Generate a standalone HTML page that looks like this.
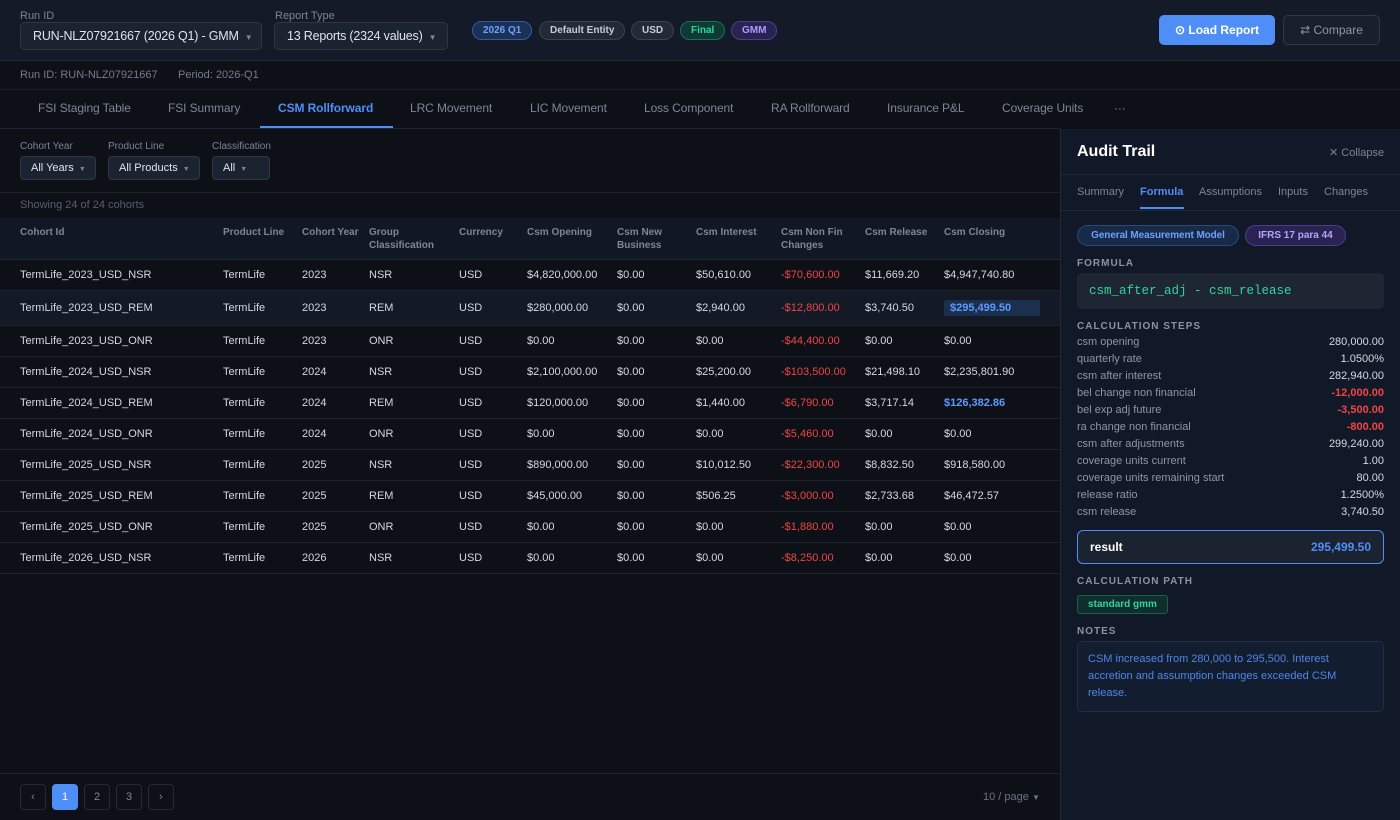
<!DOCTYPE html>
<html><head><meta charset="utf-8"><style>
*{box-sizing:border-box;margin:0;padding:0}
body{width:1400px;height:820px;overflow:hidden;background:#0d1017;font-family:"Liberation Sans",sans-serif;color:#c9d1dc;position:relative;font-size:12px}
div,span{white-space:nowrap}
.a{position:absolute;white-space:nowrap}
.top{position:absolute;left:0;top:0;width:1400px;height:61px;background:#141a27;border-bottom:1px solid #222a38}
.lbl{font-size:11px;color:#7b8494}
.sel{position:absolute;height:28px;border:1px solid #2e3746;border-radius:5px;background:#1b2230;color:#dfe5ee;font-size:12.5px;padding:0 12px;line-height:26px;letter-spacing:-0.2px}
.sel i{font-style:normal;font-size:8px;color:#7b8494;margin-left:6px}
.pill{position:absolute;top:21px;height:19px;border-radius:10px;font-size:10px;font-weight:bold;line-height:17px;padding:0 10px}
.tabs{position:absolute;top:90px;left:0;width:1060px;height:39px;border-bottom:1px solid #1f2633}
.tab{position:absolute;top:11px;font-size:12px;color:#7d8694;letter-spacing:-0.1px}
.fs{position:absolute;height:24px;border:1px solid #2e3746;border-radius:4px;background:#1b2230;color:#dfe5ee;font-size:11px;padding:0 10px;line-height:22px;top:156px}
.fs i{font-style:normal;font-size:7px;color:#7b8494;margin-left:5px}
.th{position:absolute;top:226px;font-size:10px;font-weight:bold;color:#7d8694;line-height:13px}
.row{position:absolute;left:0;width:1060px;border-bottom:1px solid #1d2430}
.row span{position:absolute;font-size:11px;color:#d3d9e2;white-space:nowrap}
.neg{color:#f04545!important}
.rp{position:absolute;left:1060px;top:129px;width:340px;height:691px;background:#111827;border-left:1px solid #222a38}
.sec{position:absolute;left:16px;font-size:10px;font-weight:bold;letter-spacing:1px;color:#8a93a2}
.st{position:absolute;left:16px;width:307px;font-size:11px;color:#8e97a5}
.st b{position:absolute;right:0;font-weight:normal;color:#d3d9e2}
.st b.r{color:#f04545;font-weight:bold}
.pg{position:absolute;top:784px;width:26px;height:26px;border:1px solid #232a36;border-radius:4px;font-size:11px;color:#7d8694;text-align:center;line-height:24px}
</style></head><body>
<div class="top"></div>
<div class="a lbl" style="left:20px;top:10px">Run ID</div>
<div class="sel" style="left:20px;top:22px;width:242px">RUN-NLZ07921667 (2026 Q1) - GMM<i>▼</i></div>
<div class="a lbl" style="left:275px;top:10px">Report Type</div>
<div class="sel" style="left:274px;top:22px;width:174px">13 Reports (2324 values)<i>▼</i></div>
<div class="pill" style="left:472px;background:#1b3156;border:1px solid #2f5ba8;color:#6ea0ff">2026 Q1</div>
<div class="pill" style="left:539px;background:#232a36;border:1px solid #3a4352;color:#c5ccd6">Default Entity</div>
<div class="pill" style="left:631px;background:#232a36;border:1px solid #3a4352;color:#c5ccd6">USD</div>
<div class="pill" style="left:680px;background:#0f3a33;border:1px solid #16705d;color:#2fd5a0">Final</div>
<div class="pill" style="left:731px;background:#2a2352;border:1px solid #4a3f8f;color:#a99cff">GMM</div>
<div class="a" style="left:1159px;top:15px;width:116px;height:30px;background:#4f8ef7;border-radius:5px;color:#fff;font-weight:bold;font-size:12px;text-align:center;line-height:30px">⊙ Load Report</div>
<div class="a" style="left:1283px;top:15px;width:97px;height:30px;background:#1a202b;border:1px solid #303846;border-radius:5px;color:#8d96a4;font-size:12px;text-align:center;line-height:28px">⇄ Compare</div>
<div class="a" style="left:20px;top:69px;font-size:11px;color:#737c8b">Run ID: RUN-NLZ07921667</div>
<div class="a" style="left:178px;top:69px;font-size:11px;color:#737c8b">Period: 2026-Q1</div>
<div class="a" style="left:0;top:89px;width:1400px;border-top:1px solid #1a202b"></div>
<div class="tabs">
<div class="tab" style="left:38px">FSI Staging Table</div>
<div class="tab" style="left:168px">FSI Summary</div>
<div class="tab" style="left:278px;color:#4f8ef7;font-weight:bold">CSM Rollforward</div>
<div class="a" style="left:260px;top:36px;width:133px;height:2px;background:#4f8ef7"></div>
<div class="tab" style="left:410px">LRC Movement</div>
<div class="tab" style="left:530px">LIC Movement</div>
<div class="tab" style="left:644px">Loss Component</div>
<div class="tab" style="left:771px">RA Rollforward</div>
<div class="tab" style="left:887px">Insurance P&amp;L</div>
<div class="tab" style="left:1002px">Coverage Units</div>
<div class="tab" style="left:1114px">···</div>
</div>
<div class="a" style="left:20px;top:141px;font-size:10px;color:#7b8494">Cohort Year</div>
<div class="a" style="left:108px;top:141px;font-size:10px;color:#7b8494">Product Line</div>
<div class="a" style="left:212px;top:141px;font-size:10px;color:#7b8494">Classification</div>
<div class="fs" style="left:20px;width:76px">All Years<i>▼</i></div>
<div class="fs" style="left:108px;width:92px">All Products<i>▼</i></div>
<div class="fs" style="left:212px;width:58px">All<i>▼</i></div>
<div class="a" style="left:0;top:192px;width:1060px;border-top:1px solid #1d2430"></div>
<div class="a" style="left:20px;top:199px;font-size:11px;color:#555e6c">Showing 24 of 24 cohorts</div>
<div class="a" style="left:0;top:218px;width:1060px;height:42px;background:#111725;border-bottom:1px solid #232a36"></div>
<div class="th" style="left:20px">Cohort Id</div>
<div class="th" style="left:223px">Product Line</div>
<div class="th" style="left:302px">Cohort Year</div>
<div class="th" style="left:369px">Group<br>Classification</div>
<div class="th" style="left:459px">Currency</div>
<div class="th" style="left:527px">Csm Opening</div>
<div class="th" style="left:617px">Csm New<br>Business</div>
<div class="th" style="left:696px">Csm Interest</div>
<div class="th" style="left:781px">Csm Non Fin<br>Changes</div>
<div class="th" style="left:865px">Csm Release</div>
<div class="th" style="left:944px">Csm Closing</div>

<div class="row" style="top:260px;height:31px"><span style="left:20px;top:9px">TermLife_2023_USD_NSR</span><span style="left:223px;top:9px">TermLife</span><span style="left:302px;top:9px">2023</span><span style="left:369px;top:9px">NSR</span><span style="left:459px;top:9px">USD</span><span style="left:527px;top:9px">$4,820,000.00</span><span style="left:617px;top:9px">$0.00</span><span style="left:696px;top:9px">$50,610.00</span><span class="neg" style="left:781px;top:9px">-$70,600.00</span><span style="left:865px;top:9px">$11,669.20</span><span style="left:944px;top:9px">$4,947,740.80</span></div>
<div class="row" style="top:291px;height:35px;background:#131a26"><span style="left:20px;top:11px">TermLife_2023_USD_REM</span><span style="left:223px;top:11px">TermLife</span><span style="left:302px;top:11px">2023</span><span style="left:369px;top:11px">REM</span><span style="left:459px;top:11px">USD</span><span style="left:527px;top:11px">$280,000.00</span><span style="left:617px;top:11px">$0.00</span><span style="left:696px;top:11px">$2,940.00</span><span class="neg" style="left:781px;top:11px">-$12,800.00</span><span style="left:865px;top:11px">$3,740.50</span><span style="left:944px;top:9px;width:96px;height:16px;background:#1d2f4f;border-radius:2px;padding:2px 6px;color:#5b9bff;font-weight:bold">$295,499.50</span></div>
<div class="row" style="top:326px;height:31px"><span style="left:20px;top:9px">TermLife_2023_USD_ONR</span><span style="left:223px;top:9px">TermLife</span><span style="left:302px;top:9px">2023</span><span style="left:369px;top:9px">ONR</span><span style="left:459px;top:9px">USD</span><span style="left:527px;top:9px">$0.00</span><span style="left:617px;top:9px">$0.00</span><span style="left:696px;top:9px">$0.00</span><span class="neg" style="left:781px;top:9px">-$44,400.00</span><span style="left:865px;top:9px">$0.00</span><span style="left:944px;top:9px">$0.00</span></div>
<div class="row" style="top:357px;height:31px"><span style="left:20px;top:9px">TermLife_2024_USD_NSR</span><span style="left:223px;top:9px">TermLife</span><span style="left:302px;top:9px">2024</span><span style="left:369px;top:9px">NSR</span><span style="left:459px;top:9px">USD</span><span style="left:527px;top:9px">$2,100,000.00</span><span style="left:617px;top:9px">$0.00</span><span style="left:696px;top:9px">$25,200.00</span><span class="neg" style="left:781px;top:9px">-$103,500.00</span><span style="left:865px;top:9px">$21,498.10</span><span style="left:944px;top:9px">$2,235,801.90</span></div>
<div class="row" style="top:388px;height:31px"><span style="left:20px;top:9px">TermLife_2024_USD_REM</span><span style="left:223px;top:9px">TermLife</span><span style="left:302px;top:9px">2024</span><span style="left:369px;top:9px">REM</span><span style="left:459px;top:9px">USD</span><span style="left:527px;top:9px">$120,000.00</span><span style="left:617px;top:9px">$0.00</span><span style="left:696px;top:9px">$1,440.00</span><span class="neg" style="left:781px;top:9px">-$6,790.00</span><span style="left:865px;top:9px">$3,717.14</span><span style="left:944px;top:9px;color:#5b9bff;font-weight:bold">$126,382.86</span></div>
<div class="row" style="top:419px;height:31px"><span style="left:20px;top:9px">TermLife_2024_USD_ONR</span><span style="left:223px;top:9px">TermLife</span><span style="left:302px;top:9px">2024</span><span style="left:369px;top:9px">ONR</span><span style="left:459px;top:9px">USD</span><span style="left:527px;top:9px">$0.00</span><span style="left:617px;top:9px">$0.00</span><span style="left:696px;top:9px">$0.00</span><span class="neg" style="left:781px;top:9px">-$5,460.00</span><span style="left:865px;top:9px">$0.00</span><span style="left:944px;top:9px">$0.00</span></div>
<div class="row" style="top:450px;height:31px"><span style="left:20px;top:9px">TermLife_2025_USD_NSR</span><span style="left:223px;top:9px">TermLife</span><span style="left:302px;top:9px">2025</span><span style="left:369px;top:9px">NSR</span><span style="left:459px;top:9px">USD</span><span style="left:527px;top:9px">$890,000.00</span><span style="left:617px;top:9px">$0.00</span><span style="left:696px;top:9px">$10,012.50</span><span class="neg" style="left:781px;top:9px">-$22,300.00</span><span style="left:865px;top:9px">$8,832.50</span><span style="left:944px;top:9px">$918,580.00</span></div>
<div class="row" style="top:481px;height:31px"><span style="left:20px;top:9px">TermLife_2025_USD_REM</span><span style="left:223px;top:9px">TermLife</span><span style="left:302px;top:9px">2025</span><span style="left:369px;top:9px">REM</span><span style="left:459px;top:9px">USD</span><span style="left:527px;top:9px">$45,000.00</span><span style="left:617px;top:9px">$0.00</span><span style="left:696px;top:9px">$506.25</span><span class="neg" style="left:781px;top:9px">-$3,000.00</span><span style="left:865px;top:9px">$2,733.68</span><span style="left:944px;top:9px">$46,472.57</span></div>
<div class="row" style="top:512px;height:31px"><span style="left:20px;top:9px">TermLife_2025_USD_ONR</span><span style="left:223px;top:9px">TermLife</span><span style="left:302px;top:9px">2025</span><span style="left:369px;top:9px">ONR</span><span style="left:459px;top:9px">USD</span><span style="left:527px;top:9px">$0.00</span><span style="left:617px;top:9px">$0.00</span><span style="left:696px;top:9px">$0.00</span><span class="neg" style="left:781px;top:9px">-$1,880.00</span><span style="left:865px;top:9px">$0.00</span><span style="left:944px;top:9px">$0.00</span></div>
<div class="row" style="top:543px;height:31px"><span style="left:20px;top:9px">TermLife_2026_USD_NSR</span><span style="left:223px;top:9px">TermLife</span><span style="left:302px;top:9px">2026</span><span style="left:369px;top:9px">NSR</span><span style="left:459px;top:9px">USD</span><span style="left:527px;top:9px">$0.00</span><span style="left:617px;top:9px">$0.00</span><span style="left:696px;top:9px">$0.00</span><span class="neg" style="left:781px;top:9px">-$8,250.00</span><span style="left:865px;top:9px">$0.00</span><span style="left:944px;top:9px">$0.00</span></div>

<div class="a" style="left:0;top:773px;width:1060px;border-top:1px solid #1d2430"></div>
<div class="pg" style="left:20px">‹</div>
<div class="pg" style="left:52px;background:#4f8ef7;border-color:#4f8ef7;color:#fff">1</div>
<div class="pg" style="left:84px">2</div>
<div class="pg" style="left:116px">3</div>
<div class="pg" style="left:148px">›</div>
<div class="a" style="left:983px;top:791px;font-size:11px;color:#6b7482">10 / page <span style="font-size:8px">▼</span></div>

<div class="rp">
<div class="a" style="left:16px;top:14px;font-size:16px;font-weight:bold;color:#fff">Audit Trail</div>
<div class="a" style="left:268px;top:17px;font-size:11px;color:#7d8694">✕ Collapse</div>
<div class="a" style="left:0;top:45px;width:340px;border-top:1px solid #222a38"></div>
<div class="a" style="left:16px;top:57px;font-size:11px;color:#7d8694">Summary</div>
<div class="a" style="left:79px;top:57px;font-size:11px;color:#4f8ef7;font-weight:bold">Formula</div>
<div class="a" style="left:79px;top:78px;width:44px;height:2px;background:#4f8ef7"></div>
<div class="a" style="left:138px;top:57px;font-size:11px;color:#7d8694">Assumptions</div>
<div class="a" style="left:217px;top:57px;font-size:11px;color:#7d8694">Inputs</div>
<div class="a" style="left:263px;top:57px;font-size:11px;color:#7d8694">Changes</div>
<div class="a" style="left:0;top:81px;width:340px;border-top:1px solid #222a38"></div>
<div class="a" style="left:16px;top:96px;width:162px;height:21px;text-align:center;border-radius:11px;background:#172a47;border:1px solid #2b4a78;color:#6ea0ff;font-size:10px;font-weight:bold;line-height:19px;letter-spacing:-0.1px">General Measurement Model</div>
<div class="a" style="left:184px;top:96px;width:101px;height:21px;text-align:center;border-radius:11px;background:#2a2352;border:1px solid #4a3f8f;color:#b1a5ff;font-size:10px;font-weight:bold;line-height:19px">IFRS 17 para 44</div>
<div class="sec" style="top:129px">FORMULA</div>
<div class="a" style="left:16px;top:144px;width:307px;height:36px;background:#1e2633;border-radius:5px;padding-left:12px;line-height:36px;font-family:'Liberation Mono','DejaVu Sans Mono',monospace;font-size:12.5px;color:#2fd5a0">csm_after_adj - csm_release</div>
<div class="sec" style="top:192px">CALCULATION STEPS</div>
<div class="st" style="top:207px">csm opening<b>280,000.00</b></div>
<div class="st" style="top:224px">quarterly rate<b>1.0500%</b></div>
<div class="st" style="top:241px">csm after interest<b>282,940.00</b></div>
<div class="st" style="top:258px">bel change non financial<b class="r">-12,000.00</b></div>
<div class="st" style="top:275px">bel exp adj future<b class="r">-3,500.00</b></div>
<div class="st" style="top:292px">ra change non financial<b class="r">-800.00</b></div>
<div class="st" style="top:309px">csm after adjustments<b>299,240.00</b></div>
<div class="st" style="top:326px">coverage units current<b>1.00</b></div>
<div class="st" style="top:343px">coverage units remaining start<b>80.00</b></div>
<div class="st" style="top:360px">release ratio<b>1.2500%</b></div>
<div class="st" style="top:377px">csm release<b>3,740.50</b></div>
<div class="a" style="left:16px;top:401px;width:307px;height:34px;background:#1b2331;border:1px solid #4f8ef7;border-radius:6px"><span class="a" style="left:12px;top:9px;font-size:12px;font-weight:bold;color:#fff">result</span><span class="a" style="right:12px;top:9px;font-size:12px;font-weight:bold;color:#4f8ef7">295,499.50</span></div>
<div class="sec" style="top:447px">CALCULATION PATH</div>
<div class="a" style="left:16px;top:466px;width:91px;text-align:center;height:19px;background:#0f2e2c;border:1px solid #17604f;border-radius:3px;color:#2fd5a0;font-size:10px;font-weight:bold;line-height:17px">standard gmm</div>
<div class="sec" style="top:497px">NOTES</div>
<div class="a" style="left:16px;top:512px;width:307px;height:71px;background:#131d30;border:1px solid #222e44;border-radius:5px;padding:9px 10px;white-space:normal;font-size:11px;line-height:17px;color:#4f86e6">CSM increased from 280,000 to 295,500. Interest accretion and assumption changes exceeded CSM release.</div>
</div>
</body></html>
